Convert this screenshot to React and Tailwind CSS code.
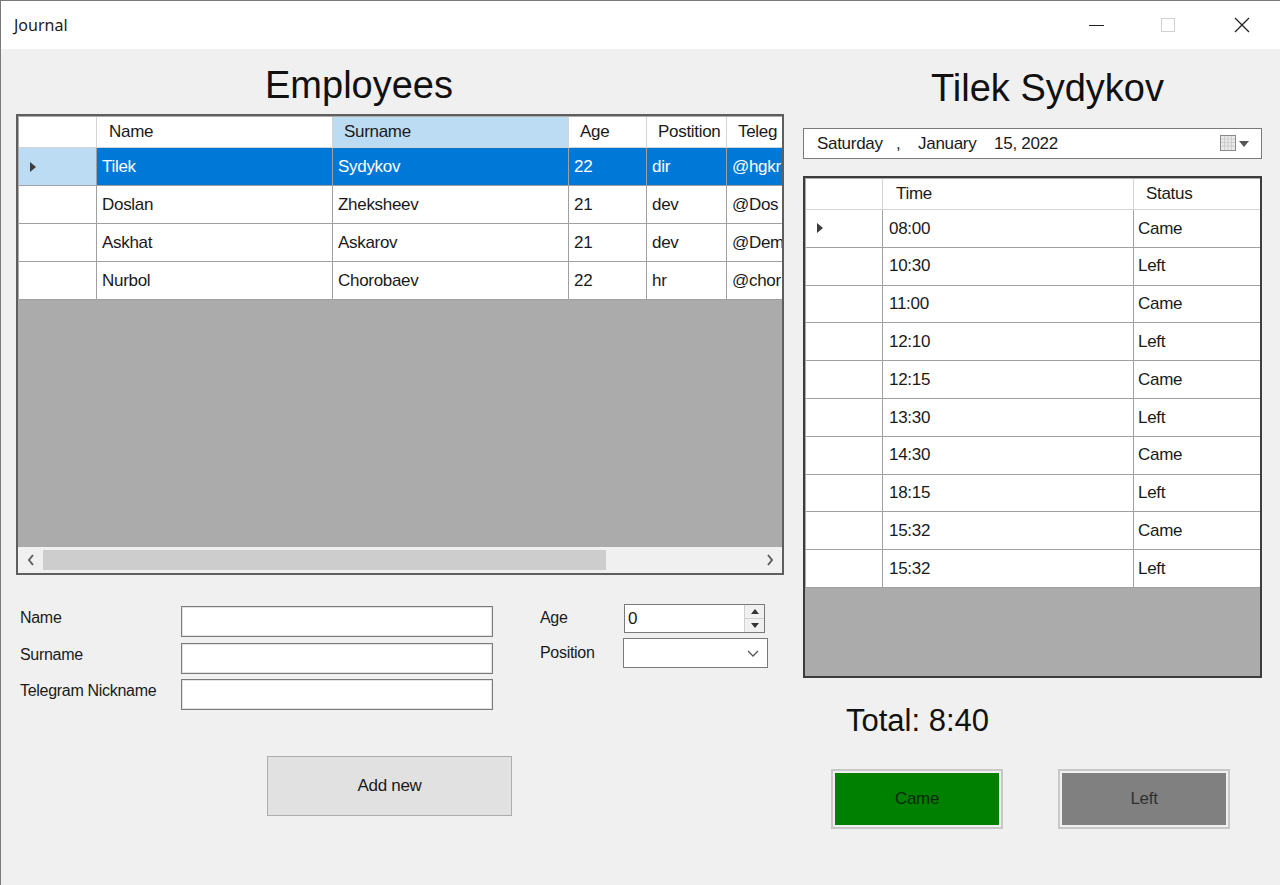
import React from "react";

const employees = [
  { name: "Tilek", surname: "Sydykov", age: "22", pos: "dir", tg: "@hgkr" },
  { name: "Doslan", surname: "Zheksheev", age: "21", pos: "dev", tg: "@Dos" },
  { name: "Askhat", surname: "Askarov", age: "21", pos: "dev", tg: "@Dem" },
  { name: "Nurbol", surname: "Chorobaev", age: "22", pos: "hr", tg: "@chor" },
];

const records = [
  ["08:00", "Came"],
  ["10:30", "Left"],
  ["11:00", "Came"],
  ["12:10", "Left"],
  ["12:15", "Came"],
  ["13:30", "Left"],
  ["14:30", "Came"],
  ["18:15", "Left"],
  ["15:32", "Came"],
  ["15:32", "Left"],
];

const font = "font-['Liberation_Sans',Arial,sans-serif]";

// little black triangle for the current row
const RowArrow = () => (
  <svg width="8" height="12" viewBox="0 0 8 12">
    <path d="M1 1 L7 6 L1 11 Z" fill="#3c3c3c" />
  </svg>
);

function TitleBar() {
  return (
    <div className="h-[49px] bg-white flex items-center border-t border-l border-[#7a7a7a]">
      <span className="ml-[13px] text-[16px] text-[#1a1a1a] font-['Noto_Sans',sans-serif]">Journal</span>
      <div className="ml-auto flex items-center h-full">
        <div className="w-[72px] h-full flex items-center justify-center">
          <div className="w-[15px] h-px bg-[#222]"></div>
        </div>
        <div className="w-[72px] h-full flex items-center justify-center">
          <div className="w-[14px] h-[14px] border border-[#cfcfcf]"></div>
        </div>
        <div className="w-[76px] h-full flex items-center justify-center">
          <svg width="16" height="16" viewBox="0 0 16 16">
            <path d="M1 1 L15 15 M15 1 L1 15" stroke="#222" strokeWidth="1.3" />
          </svg>
        </div>
      </div>
    </div>
  );
}

function EmployeesGrid() {
  const cols = "grid grid-cols-[78px_236px_236px_78px_80px_1fr]";
  return (
    <div className={`h-[461px] border-2 border-[#5e5e5e] bg-[#ababab] flex flex-col ${font} text-[17px] tracking-[-0.3px]`}>
      <div className="flex-1 overflow-hidden pl-px pt-px">
        <div className={`${cols} h-[31px] bg-white text-[#1a1a1a]`}>
          <div className="border-r border-b border-[#d4d4d4]"></div>
          <div className="border-r border-b border-[#d4d4d4] pl-[12px] flex items-center">Name</div>
          <div className="border-r border-b border-[#d4d4d4] pl-[11px] flex items-center bg-[#bcdcf4]">Surname</div>
          <div className="border-r border-b border-[#d4d4d4] pl-[11px] flex items-center">Age</div>
          <div className="border-r border-b border-[#d4d4d4] pl-[11px] flex items-center">Postition</div>
          <div className="border-b border-[#d4d4d4] pl-[11px] flex items-center whitespace-nowrap overflow-hidden">Teleg</div>
        </div>
        {employees.map((e, i) => {
          const sel = i === 0;
          const cell = `border-r border-b border-[#a0a0a0] pl-[5px] flex items-center whitespace-nowrap overflow-hidden ${sel ? "bg-[#0078d7] text-white" : "bg-white text-[#1a1a1a]"}`;
          return (
            <div key={e.name} className={`${cols} h-[38px]`}>
              <div className={`border-r border-b border-[#a0a0a0] flex items-center pl-[10px] ${sel ? "bg-[#bcdcf4]" : "bg-white"}`}>
                {sel && <RowArrow />}
              </div>
              <div className={cell}>{e.name}</div>
              <div className={cell}>{e.surname}</div>
              <div className={cell}>{e.age}</div>
              <div className={cell}>{e.pos}</div>
              <div className={cell.replace("border-r ", "")}>{e.tg}</div>
            </div>
          );
        })}
      </div>
      <div className="h-[26px] bg-[#f0f0f0] flex items-center">
        <div className="w-[25px] flex justify-center text-[#606060]">
          <svg width="8" height="12" viewBox="0 0 8 12"><path d="M6 1 L2 6 L6 11" stroke="#606060" strokeWidth="2" fill="none" /></svg>
        </div>
        <div className="h-[20px] w-[563px] bg-[#cdcdcd]"></div>
        <div className="flex-1"></div>
        <div className="w-[25px] flex justify-center">
          <svg width="8" height="12" viewBox="0 0 8 12"><path d="M2 1 L6 6 L2 11" stroke="#606060" strokeWidth="2" fill="none" /></svg>
        </div>
      </div>
    </div>
  );
}

function Field({ label }) {
  return (
    <div className="flex items-start h-[36.5px]">
      <span className="w-[165px] pl-[4px] pt-[0px] text-[16px] text-[#1a1a1a] tracking-[-0.3px]">{label}</span>
      <div className="w-[312px] h-[31px] bg-white border border-[#7a7a7a] shadow-[inset_0_0_0_1px_#e3e3e3]"></div>
    </div>
  );
}

function EmployeeForm() {
  return (
    <div className={`${font} mt-[31px] flex`}>
      <div className="flex flex-col">
        <Field label="Name" />
        <Field label="Surname" />
        <Field label="Telegram Nickname" />
      </div>
      <div className="ml-[47px] -mt-[2px] flex flex-col">
        <div className="flex items-start h-[34px]">
          <span className="w-[84px] pt-[2px] text-[16px] text-[#1a1a1a] tracking-[-0.3px]">Age</span>
          <div className="w-[141px] h-[29px] bg-white border border-[#7a7a7a] flex">
            <span className="flex-1 pl-[3px] text-[17px] leading-[27px] text-[#1a1a1a]">0</span>
            <div className="w-[20px] flex flex-col border-l border-[#d0d0d0] bg-[#f0f0f0]">
              <div className="flex-1 flex items-center justify-center border-b border-[#d0d0d0]">
                <svg width="8" height="5" viewBox="0 0 8 5"><path d="M0 5 L4 0 L8 5 Z" fill="#333" /></svg>
              </div>
              <div className="flex-1 flex items-center justify-center">
                <svg width="8" height="5" viewBox="0 0 8 5"><path d="M0 0 L4 5 L8 0 Z" fill="#333" /></svg>
              </div>
            </div>
          </div>
        </div>
        <div className="flex items-start">
          <span className="w-[83px] pt-[3px] text-[16px] text-[#1a1a1a] tracking-[-0.3px]">Position</span>
          <div className="w-[145px] h-[30px] bg-white border border-[#7a7a7a] flex items-center justify-end pr-[8px]">
            <svg width="12" height="7" viewBox="0 0 12 7"><path d="M1 1 L6 6 L11 1" stroke="#555" strokeWidth="1.3" fill="none" /></svg>
          </div>
        </div>
      </div>
    </div>
  );
}

function RecordsGrid() {
  const cols = "grid grid-cols-[77px_251px_1fr]";
  return (
    <div className={`h-[502px] border-2 border-[#3c3c3c] bg-[#ababab] pl-px pt-px ${font} text-[17px] tracking-[-0.3px] text-[#1a1a1a] overflow-hidden`}>
      <div className={`${cols} h-[31px] bg-white`}>
        <div className="border-r border-b border-[#d4d4d4]"></div>
        <div className="border-r border-b border-[#d4d4d4] pl-[13px] flex items-center">Time</div>
        <div className="border-b border-[#d4d4d4] pl-[12px] flex items-center">Status</div>
      </div>
      {records.map((r, i) => (
        <div key={i} className={`${cols} h-[37.8px] bg-white`}>
          <div className="border-r border-b border-[#a0a0a0] flex items-center pl-[10px]">{i === 0 && <RowArrow />}</div>
          <div className="border-r border-b border-[#a0a0a0] pl-[6px] flex items-center">{r[0]}</div>
          <div className="border-b border-[#a0a0a0] pl-[4px] flex items-center">{r[1]}</div>
        </div>
      ))}
    </div>
  );
}

function DatePicker() {
  return (
    <div className={`h-[31px] bg-white border border-[#7a7a7a] flex items-center ${font} text-[17px] text-[#1a1a1a] tracking-[-0.3px]`}>
      <span className="ml-[13px] whitespace-pre">Saturday   ,    January    15, 2022</span>
      <div className="ml-auto mr-[12px] flex items-center gap-[2px]">
        <svg width="17" height="17" viewBox="0 0 17 17">
          <rect x="0.5" y="0.5" width="15" height="15" fill="#e9e9e9" stroke="#8a8a8a" />
          <path d="M1 4 H15 M1 7.5 H15 M1 11 H15 M4.5 1 V15 M8 1 V15 M11.5 1 V15" stroke="#c6c6c6" strokeWidth="0.8" />
        </svg>
        <svg width="10" height="6" viewBox="0 0 10 6"><path d="M0 0 L5 6 L10 0 Z" fill="#555" /></svg>
      </div>
    </div>
  );
}

export default function App() {
  return (
    <div className="w-[1280px] h-[885px] overflow-hidden bg-[#f0f0f0]">
      <TitleBar />
      <div className="flex border-l border-[#7a7a7a] h-[836px]">
        {/* employees side */}
        <div className="ml-[15px] w-[768px] flex flex-col">
          <div className={`h-[65px] flex items-center pt-[8px] pl-[249px] text-[38px] text-[#111] ${font}`}>Employees</div>
          <EmployeesGrid />
          <EmployeeForm />
          <button className={`mt-[40px] ml-[251px] w-[245px] h-[60px] bg-[#e1e1e1] border border-[#adadad] text-[17px] text-[#1a1a1a] tracking-[-0.3px] ${font}`}>
            Add new
          </button>
        </div>

        {/* journal side */}
        <div className="ml-[19px] w-[459px] flex flex-col">
          <div className={`h-[79px] flex items-center pl-[128px] text-[38px] text-[#111] ${font}`}>Tilek Sydykov</div>
          <DatePicker />
          <div className="mt-[17px]">
            <RecordsGrid />
          </div>
          <div className={`mt-[20px] pl-[43px] text-[31px] text-[#111] ${font}`}>Total: 8:40</div>
          <div className="mt-[24px] flex pl-[28px] gap-[55px]">
            <div className="w-[172px] h-[60px] border-2 border-[#c8c8c8] p-[2px]">
              <div className={`w-full h-full bg-[#008000] flex items-center justify-center text-[17px] text-[#0a2a0a] tracking-[-0.3px] ${font}`}>Came</div>
            </div>
            <div className="w-[172px] h-[60px] border-2 border-[#c8c8c8] p-[2px]">
              <div className={`w-full h-full bg-[#808080] flex items-center justify-center text-[17px] text-[#303030] tracking-[-0.3px] ${font}`}>Left</div>
            </div>
          </div>
        </div>
      </div>
    </div>
  );
}
